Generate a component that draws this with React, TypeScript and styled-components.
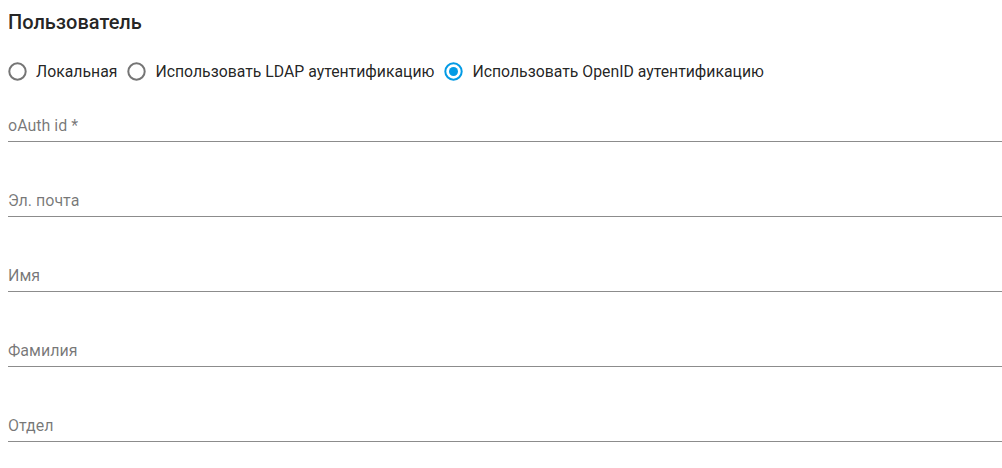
import styled, { createGlobalStyle } from 'styled-components';

const GlobalStyle = createGlobalStyle`
  html, body {
    margin: 0;
    padding: 0;
    background: #ffffff;
  }
  body {
    font-family: Roboto, "Noto Sans", Arial, sans-serif;
  }
`;

const Page = styled.div`
  padding: 8px 0 8px 8px;
  width: 994px;
`;

const Title = styled.h2`
  margin: 0;
  font-size: 20px;
  font-weight: 500;
  line-height: 28px;
  color: rgba(0, 0, 0, 0.87);
`;

const RadioGroup = styled.div`
  display: flex;
  align-items: center;
  gap: 10px;
  height: 30px;
  margin-top: 20px;
`;

const RadioLabel = styled.label`
  display: flex;
  align-items: center;
  gap: 9px;
  font-size: 15.8px;
  color: rgba(0, 0, 0, 0.87);
  cursor: pointer;
`;

const Fields = styled.div`
  display: flex;
  flex-direction: column;
  gap: 19px;
`;

const Field = styled.div`
  height: 56px;
  box-sizing: border-box;
  display: flex;
  align-items: flex-end;
  border-bottom: 1px solid rgba(0, 0, 0, 0.45);
`;

const FieldLabel = styled.span`
  font-size: 16px;
  line-height: 19px;
  padding-bottom: 6px;
  color: rgba(0, 0, 0, 0.54);
`;

const RadioIcon = ({ checked }: { checked: boolean }) => {
  const color = checked ? '#039be5' : '#757575';
  return (
    <svg width="19" height="19" viewBox="0 0 19 19">
      <circle cx="9.5" cy="9.5" r="8.2" fill="none" stroke={color} strokeWidth="2" />
      {checked && <circle cx="9.5" cy="9.5" r="4.5" fill={color} />}
    </svg>
  );
};

const options = [
  { id: 'local', label: 'Локальная' },
  { id: 'ldap', label: 'Использовать LDAP аутентификацию' },
  { id: 'openid', label: 'Использовать OpenID аутентификацию' },
];

const fields = ['oAuth id *', 'Эл. почта', 'Имя', 'Фамилия', 'Отдел'];

export default function App() {
  const selected = 'openid';

  return (
    <Page>
      <GlobalStyle />
      <Title>Пользователь</Title>
      <RadioGroup>
        {options.map((o) => (
          <RadioLabel key={o.id}>
            <RadioIcon checked={o.id === selected} />
            {o.label}
          </RadioLabel>
        ))}
      </RadioGroup>
      <Fields>
        {fields.map((f) => (
          <Field key={f}>
            <FieldLabel>{f}</FieldLabel>
          </Field>
        ))}
      </Fields>
    </Page>
  );
}
